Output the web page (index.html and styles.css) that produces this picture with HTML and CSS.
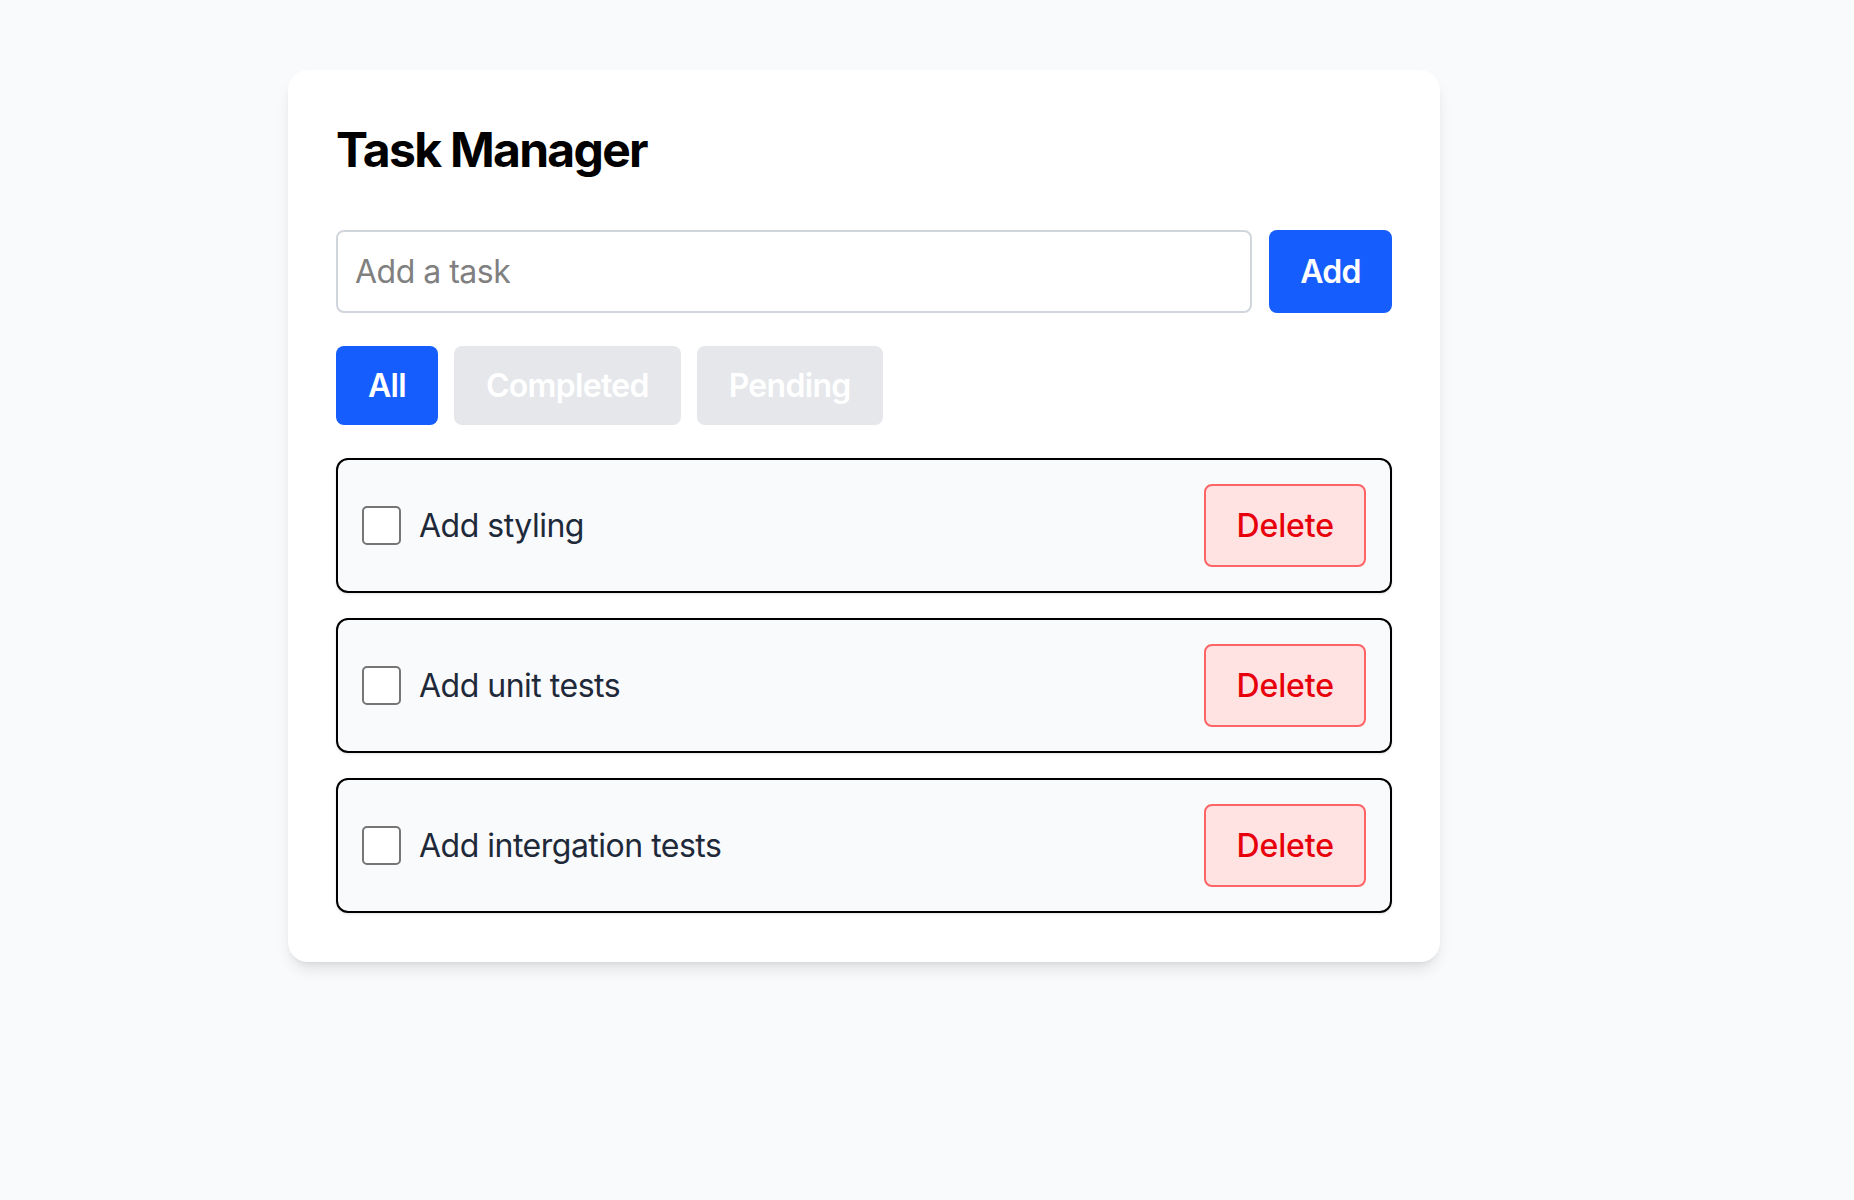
FILE: index.html
```html
<!DOCTYPE html>
<html lang="en">
<head>
<meta charset="utf-8">
<title>Task Manager</title>
<link rel="stylesheet" href="styles.css">
</head>
<body>
<main class="card">
  <h1 class="title">Task Manager</h1>
  <form class="add-form" onsubmit="return false">
    <input class="task-input" type="text" placeholder="Add a task">
    <button class="btn btn-primary add-btn" type="submit">Add</button>
  </form>
  <div class="filters">
    <button class="btn filter active">All</button>
    <button class="btn filter">Completed</button>
    <button class="btn filter">Pending</button>
  </div>
  <ul class="task-list">
    <li class="task">
      <label class="task-label"><input class="check" type="checkbox"><span class="task-text">Add styling</span></label>
      <button class="btn delete">Delete</button>
    </li>
    <li class="task">
      <label class="task-label"><input class="check" type="checkbox"><span class="task-text">Add unit tests</span></label>
      <button class="btn delete">Delete</button>
    </li>
    <li class="task">
      <label class="task-label"><input class="check" type="checkbox"><span class="task-text">Add intergation tests</span></label>
      <button class="btn delete">Delete</button>
    </li>
  </ul>
</main>
</body>
</html>
```
FILE: styles.css
```css
* { box-sizing: border-box; }

html, body {
  margin: 0;
  background: #f9fafb;
  font-family: Inter, "Noto Sans", "Liberation Sans", sans-serif;
}

body {
  padding: 70px 0 0 288px;
  min-height: 1200px;
}

.card {
  width: 1152px;
  background: #ffffff;
  border-radius: 20px;
  padding: 48px 48px 49px;
  box-shadow: 0 10px 15px -3px rgba(0,0,0,0.1), 0 4px 6px -4px rgba(0,0,0,0.1);
}

.title {
  margin: 0 0 48px;
  font-size: 48px;
  line-height: 64px;
  font-weight: 700;
  letter-spacing: -1.7px;
  color: #000;
}

.add-form {
  display: flex;
  gap: 17px;
  margin: 0 0 33px;
}

.task-input {
  flex: 1;
  height: 83px;
  border: 2px solid #d1d5dc;
  border-radius: 8px;
  padding: 0 17px;
  font-family: inherit;
  font-size: 32px;
  letter-spacing: -0.5px;
  color: #1e2939;
  background: #fff;
  outline: none;
}
.task-input::placeholder { color: #808080; }

.btn {
  font-family: inherit;
  font-size: 32px;
  line-height: 47px;
  letter-spacing: -0.7px;
  border: 0;
  border-radius: 8px;
  padding: 16px 32px;
  cursor: pointer;
}

.btn-primary {
  background: #155dfc;
  color: #fff;
  font-weight: 600;
}

.add-btn {
  width: 123px;
  height: 83px;
  padding: 0;
}

.filters {
  display: flex;
  gap: 16px;
  margin: 0 0 33px;
}

.filter {
  background: #e5e7eb;
  color: #fff;
  font-weight: 600;
}
.filter.active {
  background: #155dfc;
  color: #fff;
}

.task-list {
  list-style: none;
  margin: 0;
  padding: 0;
  display: flex;
  flex-direction: column;
  gap: 25px;
}

.task {
  display: flex;
  align-items: center;
  justify-content: space-between;
  background: #f9fafb;
  border: 2px solid #000;
  border-radius: 12px;
  padding: 24px;
  box-shadow: 0 1px 3px rgba(0,0,0,0.1);
}

.task-label {
  display: flex;
  align-items: center;
  gap: 18px;
}

.check {
  appearance: none;
  -webkit-appearance: none;
  margin: 0;
  width: 39px;
  height: 39px;
  border: 2px solid #767676;
  border-radius: 5px;
  background: #fff;
}

.task-text {
  font-size: 32px;
  letter-spacing: -0.5px;
  color: #1e2939;
}

.delete {
  background: #ffe2e2;
  color: #e7000b;
  border: 2px solid #ff6467;
  font-weight: 500;
  letter-spacing: -0.1px;
  padding: 16px 30px;
  border-radius: 8px;
}
```
